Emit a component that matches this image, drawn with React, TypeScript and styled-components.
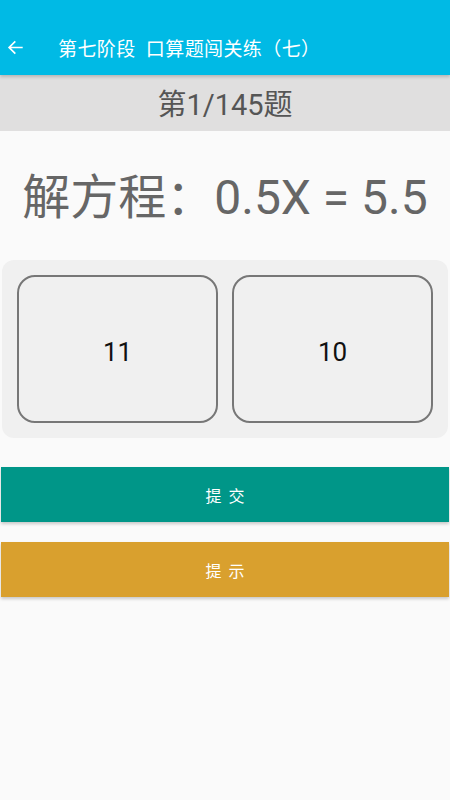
import React from 'react';
import styled, { createGlobalStyle } from 'styled-components';

const GlobalStyle = createGlobalStyle`
  html, body {
    margin: 0;
    padding: 0;
    background: #fafafa;
    font-family: Roboto, "Noto Sans CJK SC", sans-serif;
  }
`;

const Page = styled.div`
  width: 450px;
  min-height: 800px;
  background: #fafafa;
  display: flex;
  flex-direction: column;
`;

const Header = styled.header`
  background: #00bae5;
  padding-top: 25px;
  box-shadow: 0 2px 3px rgba(0, 0, 0, 0.18);
  position: relative;
  z-index: 1;
`;

const Toolbar = styled.div`
  height: 44px;
  padding-bottom: 6px;
  display: flex;
  align-items: center;
  color: #fff;
`;

const Back = styled.button`
  width: 28px;
  height: 28px;
  margin-left: 1px;
  padding: 0;
  border: 0;
  background: none;
  color: #fff;
  display: flex;
  align-items: center;
  justify-content: center;
`;

const Title = styled.h1`
  margin: 0 0 0 29px;
  font-size: 19px;
  font-weight: normal;
  letter-spacing: 0.4px;
`;

const Counter = styled.div`
  height: 56px;
  padding-bottom: 3px;
  box-sizing: border-box;
  background: #e0dfdf;
  display: flex;
  align-items: center;
  justify-content: center;
  font-size: 29px;
  color: #555;
`;

const Equation = styled.div`
  height: 129px;
  padding-bottom: 5px;
  box-sizing: border-box;
  display: flex;
  align-items: center;
  justify-content: center;
  font-size: 48px;
  color: #666;
  white-space: pre;
`;

const Options = styled.div`
  margin: 0 2px;
  padding: 15px;
  background: #f0f0f0;
  border-radius: 12px;
  display: grid;
  grid-template-columns: 1fr 1fr;
  gap: 14px;
`;

const Option = styled.button`
  height: 148px;
  border: 2px solid #777;
  border-radius: 18px;
  background: #f0f0f0;
  padding: 5px 0 0;
  font-family: Roboto, sans-serif;
  font-size: 26px;
  color: #111;
`;

const Actions = styled.div`
  margin-top: 29px;
  display: flex;
  flex-direction: column;
  gap: 20px;
`;

const ActionButton = styled.button<{ $bg: string }>`
  height: 55px;
  margin: 0 1px;
  border: 0;
  background: ${p => p.$bg};
  color: #fff;
  font-family: Roboto, "Noto Sans CJK SC", sans-serif;
  font-size: 16px;
  letter-spacing: 7px;
  text-indent: 7px;
  box-shadow: 0 2px 3px rgba(0, 0, 0, 0.2);
`;

export default function App() {
  return (
    <Page>
      <GlobalStyle />
      <Header>
        <Toolbar>
          <Back aria-label="back">
            <svg width="19" height="19" viewBox="0 0 24 24" fill="none" stroke="#fff" strokeWidth="2.2" strokeLinecap="square">
              <path d="M20 12H5M11 5l-7 7 7 7" />
            </svg>
          </Back>
          <Title>第七阶段&nbsp;&nbsp;口算题闯关练（七）</Title>
        </Toolbar>
      </Header>
      <Counter>第1/145题</Counter>
      <Equation>{'解方程：0.5X = 5.5'}</Equation>
      <Options>
        <Option>11</Option>
        <Option>10</Option>
      </Options>
      <Actions>
        <ActionButton $bg="#009688">提交</ActionButton>
        <ActionButton $bg="#d9a02e">提示</ActionButton>
      </Actions>
    </Page>
  );
}
